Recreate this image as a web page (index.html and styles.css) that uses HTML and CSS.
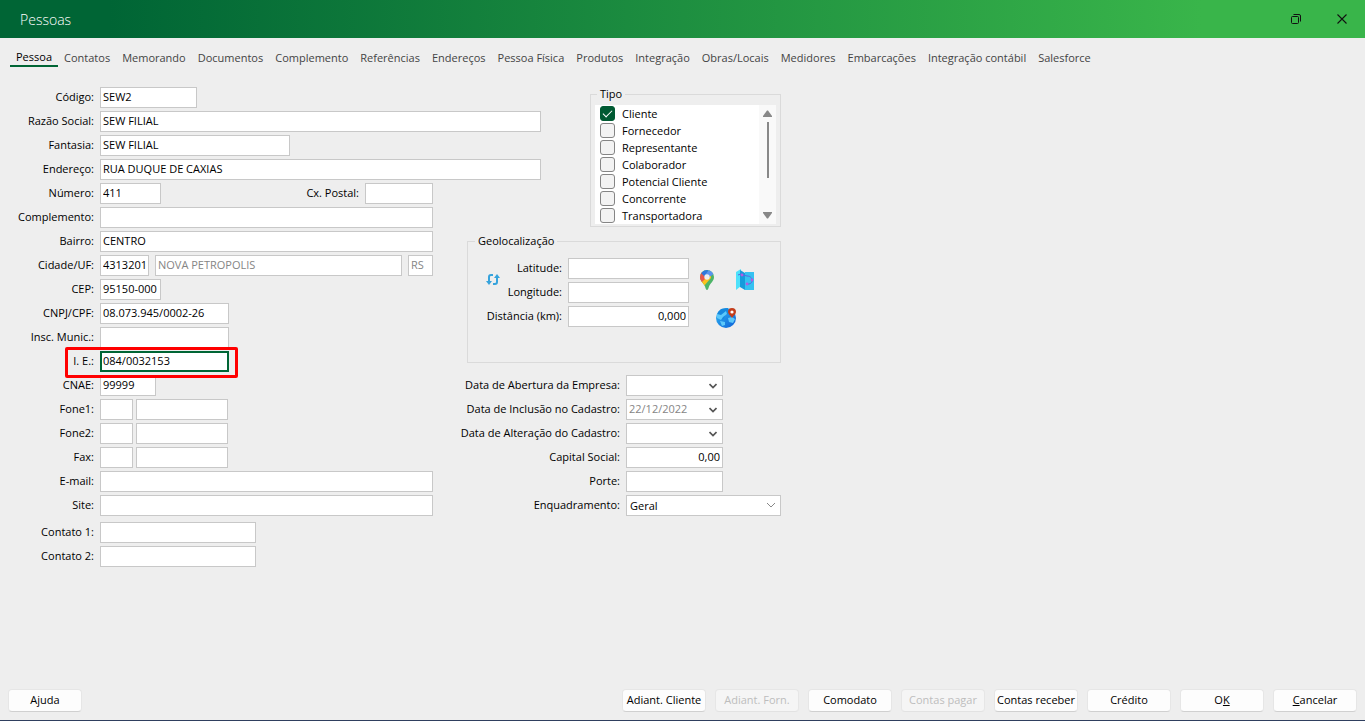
FILE: index.html
```html
<!DOCTYPE html>
<html lang="pt-BR">
<head>
<meta charset="utf-8">
<title>Pessoas</title>
<link rel="stylesheet" href="styles.css">
</head>
<body>
<header class="titlebar">
  <h1 class="title">Pessoas</h1>
  <div class="window-actions">
    <button type="button" class="window-button" aria-label="Restaurar">
      <svg width="12" height="12" viewBox="0 0 12 12" fill="none" stroke="#111"><rect x="1.5" y="3.5" width="7" height="7" rx="1"/><path d="M3.5 1.500H9Q10.500 1.500 10.500 3V8.500"/></svg>
    </button>
    <button type="button" class="window-button" aria-label="Fechar">
      <svg width="12" height="12" viewBox="0 0 12 12" fill="none" stroke="#111" stroke-width="1.100"><path d="M1.500 1.500l9 9M10.500 1.500l-9 9"/></svg>
    </button>
  </div>
</header>
<nav class="tabs">
  <a href="#" class="tab tab-active">Pessoa</a>
  <a href="#" class="tab">Contatos</a>
  <a href="#" class="tab">Memorando</a>
  <a href="#" class="tab">Documentos</a>
  <a href="#" class="tab">Complemento</a>
  <a href="#" class="tab">Referências</a>
  <a href="#" class="tab">Endereços</a>
  <a href="#" class="tab">Pessoa Física</a>
  <a href="#" class="tab">Produtos</a>
  <a href="#" class="tab">Integração</a>
  <a href="#" class="tab">Obras/Locais</a>
  <a href="#" class="tab">Medidores</a>
  <a href="#" class="tab">Embarcações</a>
  <a href="#" class="tab">Integração contábil</a>
  <a href="#" class="tab">Salesforce</a>
</nav>
<main class="content">
  <form class="fields">
    <div class="row"><label class="label" for="codigo">Código:</label><input class="field w-code" id="codigo" value="SEW2"></div>
    <div class="row"><label class="label" for="razao">Razão Social:</label><input class="field w-full" id="razao" value="SEW FILIAL"></div>
    <div class="row"><label class="label" for="fantasia">Fantasia:</label><input class="field w-trade" id="fantasia" value="SEW FILIAL"></div>
    <div class="row"><label class="label" for="endereco">Endereço:</label><input class="field w-full" id="endereco" value="RUA DUQUE DE CAXIAS"></div>
    <div class="row row-wide"><label class="label" for="numero">Número:</label><input class="field w-short" id="numero" value="411"><label class="push" for="caixa">Cx. Postal:</label><input class="field w-box" id="caixa"></div>
    <div class="row"><label class="label" for="complemento">Complemento:</label><input class="field w-long" id="complemento"></div>
    <div class="row"><label class="label" for="bairro">Bairro:</label><input class="field w-long" id="bairro" value="CENTRO"></div>
    <div class="row row-wide"><label class="label" for="cidade">Cidade/UF:</label><input class="field w-city" id="cidade" value="4313201"><input class="field grow" aria-label="Nome da cidade" value="NOVA PETROPOLIS" disabled><input class="field w-uf" aria-label="UF" value="RS" disabled></div>
    <div class="row"><label class="label" for="cep">CEP:</label><input class="field w-short" id="cep" value="95150-000"></div>
    <div class="row"><label class="label" for="cnpj">CNPJ/CPF:</label><input class="field w-doc" id="cnpj" value="08.073.945/0002-26"></div>
    <div class="row"><label class="label" for="municipal">Insc. Munic.:</label><input class="field w-doc" id="municipal"></div>
    <div class="row row-marked"><label class="label" for="ie">I. E.:</label><input class="field field-current w-doc" id="ie" value="084/0032153"></div>
    <div class="row"><label class="label" for="cnae">CNAE:</label><input class="field w-cnae" id="cnae" value="99999"></div>
    <div class="row"><label class="label" for="fone1">Fone1:</label><div class="phone"><input class="field w-area" aria-label="DDD do Fone1"><input class="field w-phone" id="fone1"></div></div>
    <div class="row"><label class="label" for="fone2">Fone2:</label><div class="phone"><input class="field w-area" aria-label="DDD do Fone2"><input class="field w-phone" id="fone2"></div></div>
    <div class="row"><label class="label" for="fax">Fax:</label><div class="phone"><input class="field w-area" aria-label="DDD do Fax"><input class="field w-phone" id="fax"></div></div>
    <div class="row"><label class="label" for="email">E-mail:</label><input class="field w-long" id="email"></div>
    <div class="row"><label class="label" for="site">Site:</label><input class="field w-long" id="site"></div>
    <div class="row row-spaced"><label class="label" for="contato1">Contato 1:</label><input class="field w-contact" id="contato1"></div>
    <div class="row"><label class="label" for="contato2">Contato 2:</label><input class="field w-contact" id="contato2"></div>
  </form>

  <div class="side">
    <fieldset class="group group-type">
      <legend>Tipo</legend>
      <div class="list">
        <div class="options">
          <label class="option"><input type="checkbox" class="check" checked>Cliente</label>
          <label class="option"><input type="checkbox" class="check">Fornecedor</label>
          <label class="option"><input type="checkbox" class="check">Representante</label>
          <label class="option"><input type="checkbox" class="check">Colaborador</label>
          <label class="option"><input type="checkbox" class="check">Potencial Cliente</label>
          <label class="option"><input type="checkbox" class="check">Concorrente</label>
          <label class="option"><input type="checkbox" class="check">Transportadora</label>
        </div>
        <div class="scroll">
          <svg width="9" height="7" viewBox="0 0 9 7" fill="#888"><path d="M4 0.500h1L9 6v1H0V6z"/></svg>
          <span class="thumb"></span>
          <svg width="9" height="7" viewBox="0 0 9 7" fill="#888"><path d="M0 0h9v1L5 6.500H4L0 1z"/></svg>
        </div>
      </div>
    </fieldset>

    <fieldset class="group group-geo">
      <legend>Geolocalização</legend>
      <div class="geo">
        <button type="button" class="icon-button sync" aria-label="Atualizar coordenadas">
          <svg width="14" height="14" viewBox="0 0 14 14" fill="none" stroke="#36a3dc" stroke-width="2"><path d="M7 2H5Q3 2 3 4V9"/><path d="M7 11h2q2 0 2-2V5"/><path d="M0 8h6l-3 4zM8 5h6l-3-4z" fill="#36a3dc" stroke="none"/></svg>
        </button>
        <div class="geo-fields">
          <div class="row"><label class="geo-label" for="latitude">Latitude:</label><input class="field w-geo" id="latitude"></div>
          <div class="row"><label class="geo-label" for="longitude">Longitude:</label><input class="field w-geo" id="longitude"></div>
          <div class="row"><label class="geo-label" for="distancia">Distância (km):</label><input class="field w-geo number" id="distancia" value="0,000"></div>
        </div>
        <div class="maps">
          <button type="button" class="icon-button" aria-label="Ver no mapa">
            <svg width="16" height="22" viewBox="0 0 16 22"><defs><clipPath id="pin"><path d="M8 1a7 7 0 0 1 7 7c0 4-3.500 6-5 9.500-.7 2-1 3.500-2 3.500s-1.300-1.500-2-3.500C4.500 14 1 12 1 8a7 7 0 0 1 7-7z"/></clipPath></defs><g clip-path="url(#pin)"><path fill="#4db468" d="M0 0h16v22H0z"/><path fill="#fbc21c" d="M0 15L12 3v6L4 18z"/><path fill="#e8584b" d="M0 3h3l5 5-7 7H0z"/><path fill="#2f78dd" d="M2 4l4-4h4L6 8z"/><path fill="#5a93ee" d="M5 0h11v4L9 9 6 6l4-5z"/></g><circle cx="8" cy="8" r="2.700" fill="#eee"/></svg>
          </button>
          <button type="button" class="icon-button" aria-label="Traçar rota">
            <svg width="20" height="22" viewBox="0 0 20 22"><path fill="#4de1fb" d="M1 3l5-3v17l-5 4z"/><path fill="#159bdc" d="M5 1l5 3v17l-5-3z"/><path fill="#35c1f1" d="M10 3h9v18h-9z"/><path d="M3 6q3-2 5 0l4 1c6 0 7 7 2 8h-3" fill="none" stroke="#5a66df"/><g fill="#b45be2"><circle cx="7" cy="6" r="1.400"/><circle cx="17" cy="11" r="1.400"/><circle cx="12" cy="15" r="1.400"/></g></svg>
          </button>
          <button type="button" class="icon-button globe" aria-label="Calcular distância">
            <svg width="22" height="22" viewBox="0 0 22 22"><defs><linearGradient id="sea" x2="1" y2="1"><stop stop-color="#2fb8f4"/><stop offset="1" stop-color="#0e5fd6"/></linearGradient></defs><circle cx="11" cy="11" r="10" fill="url(#sea)"/><path fill="#1688df" d="M6 2l7-1v6l-3 1-1 4-3 1-4-4 1-4z"/><path fill="#5cc8fa" d="M2 7l4 1 5-4 1 3-4 3-2 3-4-2zM13 11l4-1 3 2-2 4-4-1zM5 14l5 1v3l-3 1z"/><path fill="#c43e1c" d="M17 1a4 4 0 0 1 4 4c0 2-2 3-4 6-2-3-4-4-4-6a4 4 0 0 1 4-4z"/><circle cx="17" cy="5" r="1.600" fill="#fff"/></svg>
          </button>
        </div>
      </div>
    </fieldset>

    <div class="details">
      <div class="row"><label class="detail-label" for="abertura">Data de Abertura da Empresa:</label><div class="date"><input class="date-input" id="abertura"><button type="button" class="date-button" aria-label="Escolher data de abertura"><svg width="8" height="6" viewBox="0 0 8 6" fill="none" stroke="#555" stroke-width="1.700"><path d="M0.500 1L4 4.500 7.500 1"/></svg></button></div></div>
      <div class="row"><label class="detail-label" for="inclusao">Data de Inclusão no Cadastro:</label><div class="date"><input class="date-input" id="inclusao" value="22/12/2022" disabled><button type="button" class="date-button" aria-label="Escolher data de inclusão"><svg width="8" height="6" viewBox="0 0 8 6" fill="none" stroke="#555" stroke-width="1.700"><path d="M0.500 1L4 4.500 7.500 1"/></svg></button></div></div>
      <div class="row"><label class="detail-label" for="alteracao">Data de Alteração do Cadastro:</label><div class="date"><input class="date-input" id="alteracao"><button type="button" class="date-button" aria-label="Escolher data de alteração"><svg width="8" height="6" viewBox="0 0 8 6" fill="none" stroke="#555" stroke-width="1.700"><path d="M0.500 1L4 4.500 7.500 1"/></svg></button></div></div>
      <div class="row"><label class="detail-label" for="capital">Capital Social:</label><input class="field w-code number" id="capital" value="0,00"></div>
      <div class="row"><label class="detail-label" for="porte">Porte:</label><input class="field w-code" id="porte"></div>
      <div class="row"><label class="detail-label" for="enquadramento">Enquadramento:</label><div class="select-box"><select class="field select" id="enquadramento"><option>Geral</option></select><svg class="select-arrow" width="10" height="6" viewBox="0 0 10 6" fill="none" stroke="#888"><path d="M1 1l4 4 4-4"/></svg></div></div>
    </div>
  </div>
</main>
<footer class="footer">
  <button type="button" class="button button-help">Ajuda</button>
  <button type="button" class="button">Adiant. Cliente</button>
  <button type="button" class="button" disabled>Adiant. Forn.</button>
  <button type="button" class="button">Comodato</button>
  <button type="button" class="button" disabled>Contas pagar</button>
  <button type="button" class="button">Contas receber</button>
  <button type="button" class="button">Crédito</button>
  <button type="button" class="button">O<u>K</u></button>
  <button type="button" class="button"><u>C</u>ancelar</button>
</footer>
</body>
</html>
```
FILE: styles.css
```css
*,
*::before,
*::after {
  box-sizing: border-box;
}

body {
  display: flex;
  flex-direction: column;
  min-height: 100vh;
  margin: 0;
  background: #eeeeee;
  border-bottom: 1px solid #2f3f5f;
  color: #000;
  font: 11px/14px "Open Sans", "Noto Sans", sans-serif;
}

button,
input,
select {
  margin: 0;
  color: inherit;
  font: inherit;
}

/* Title bar */
.titlebar {
  display: flex;
  align-items: center;
  justify-content: space-between;
  height: 38px;
  padding-left: 20px;
  background: linear-gradient(90deg, #006535 8%, #39b54a 88%);
}

.title {
  margin: 0;
  padding-top: 2px;
  color: #fff;
  font-size: 14px;
  font-weight: 300;
  line-height: 20px;
}

.window-actions {
  display: flex;
}

.window-button {
  display: grid;
  place-items: center;
  width: 46px;
  height: 38px;
  padding: 0;
  border: 0;
  background: none;
}

/* Tabs */
.tabs {
  display: flex;
  flex-wrap: wrap;
  padding: 12px 10px 20px;
}

.tab {
  height: 17px;
  padding: 1px 6px 0;
  color: #444;
  text-decoration: none;
}

.tab-active {
  padding-top: 0;
  border-bottom: 2px solid #006535;
  color: #000;
}

/* Form area: the address fields run into the blank corner of the side column */
.content {
  display: grid;
  flex: 1;
  grid-template-columns: 459px 314px 1fr;
  align-items: start;
  padding: 0 8px 16px;
}

.fields {
  display: flex;
  flex-direction: column;
  grid-area: 1 / 1 / 2 / 3;
  gap: 3px;
}

.row {
  display: flex;
  align-items: center;
  gap: 6px;
}

.row > label {
  padding-bottom: 2px;
}

.row-wide {
  width: 425px;
}

.row-spaced {
  margin-top: 3px;
}

.row-marked {
  position: relative;
}

.row-marked::after {
  position: absolute;
  top: -4px;
  left: 57px;
  width: 173px;
  height: 31px;
  border: 3px solid #f00;
  border-radius: 2px;
  content: "";
  pointer-events: none;
}

.label {
  width: 86px;
  text-align: right;
}

.push {
  margin-left: auto;
}

.field {
  min-width: 0;
  height: 21px;
  padding: 0 2px 2px;
  border: 1px solid #c8c8c8;
  border-radius: 0;
  background: #fff;
}

.field:disabled,
.date-input:disabled {
  color: #858585;
}

.field-current {
  padding: 0 1px 2px;
  border: 2px solid #006535;
}

.number {
  text-align: right;
}

.grow {
  flex: 1;
}

.phone {
  display: flex;
  gap: 3px;
}

.w-code { width: 97px; }
.w-full { width: 441px; }
.w-trade { width: 190px; }
.w-short { width: 61px; }
.w-box { width: 68px; }
.w-long { width: 333px; }
.w-city { width: 49px; }
.w-uf { width: 25px; }
.w-doc { width: 129px; }
.w-cnae { width: 56px; }
.w-area { width: 33px; }
.w-phone { width: 92px; }
.w-contact { width: 156px; }
.w-geo { width: 121px; }

/* Side column */
.side {
  display: flex;
  flex-direction: column;
  grid-area: 1 / 2 / 2 / 3;
  pointer-events: none;
}

.group,
.details {
  pointer-events: auto;
}

.group {
  min-width: 0;
  margin: 0;
  border: 1px solid #dadada;
}

.group legend {
  padding: 0 3px;
}

.group-type {
  align-self: flex-end;
  width: 191px;
  margin-bottom: 7px;
  padding: 4px 4px 2px;
}

.group-type legend {
  margin-left: 2px;
}

.list {
  display: flex;
  background: #fff;
}

.options {
  flex: 1;
  padding-left: 5px;
}

.option {
  display: flex;
  align-items: center;
  gap: 7px;
  height: 17px;
}

.check {
  width: 15px;
  height: 15px;
  border: 1px solid #858585;
  border-radius: 3px;
  background: #f3f3f3;
  appearance: none;
}

.check:checked {
  display: grid;
  place-items: center;
  border-color: #005a32;
  background: #005a32;
}

.check:checked::after {
  width: 9px;
  height: 5px;
  margin-bottom: 3px;
  border: solid #fff;
  border-width: 0 0 1px 1px;
  content: "";
  transform: rotate(-45deg);
}

.scroll {
  display: flex;
  flex-direction: column;
  align-items: center;
  gap: 5px;
  width: 17px;
  padding: 5px 0;
  background: #f9f9f9;
}

.thumb {
  width: 2px;
  height: 56px;
  margin-bottom: auto;
  background: #888;
}

.group-geo {
  margin-bottom: 12px;
  padding: 10px 18px 33px;
}

.group-geo legend {
  margin-left: -11px;
}

.geo {
  display: flex;
}

.geo-fields {
  display: flex;
  flex-direction: column;
  gap: 3px;
}

.geo-label {
  width: 76px;
  margin-left: -14px;
  text-align: right;
}

.icon-button {
  display: grid;
  place-items: center;
  padding: 0;
  border: 0;
  background: none;
}

.sync {
  align-self: flex-start;
  padding-top: 15px;
}

.maps {
  display: grid;
  grid-template-columns: 20px 20px;
  align-content: start;
  gap: 16px 18px;
  padding: 11px 0 0 8px;
}

.globe {
  grid-column: 1 / 3;
}

.details {
  display: flex;
  flex-direction: column;
  gap: 3px;
  margin-left: -15px;
}

.detail-label {
  width: 168px;
  text-align: right;
}

.date {
  display: flex;
  width: 97px;
  height: 21px;
  border: 1px solid #c8c8c8;
  background: #fff;
}

.date-input {
  flex: 1;
  min-width: 0;
  padding: 0 2px 2px;
  border: 0;
  background: none;
}

.date-button {
  display: grid;
  place-items: center;
  width: 18px;
  padding: 0;
  border: 0;
  background: none;
}

.select-box {
  position: relative;
  flex: 1;
}

.select {
  display: block;
  width: 100%;
  padding: 0 3px;
  appearance: none;
}

.select-arrow {
  position: absolute;
  top: 7px;
  right: 5px;
  pointer-events: none;
}

/* Footer */
.footer {
  display: flex;
  flex-wrap: wrap;
  gap: 9px;
  padding: 0 8px 8px;
}

.button {
  width: 84px;
  height: 23px;
  padding: 0 0 2px;
  border: 1px solid #e6e6e6;
  border-bottom-color: #d0d0d0;
  border-radius: 4px;
  background: #fdfdfd;
  white-space: nowrap;
}

.button:disabled {
  border-bottom-color: #e2e2e2;
  background: #f5f5f5;
  color: #bdbdbd;
}

.button-help {
  width: 74px;
  margin-right: auto;
}
```
